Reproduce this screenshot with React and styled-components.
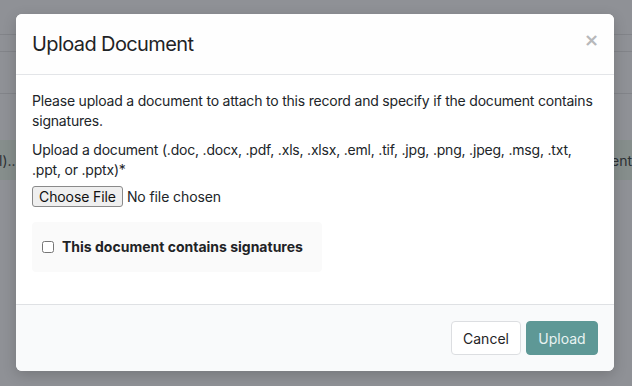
import React from "react";
import styled, { createGlobalStyle } from "styled-components";

const Global = createGlobalStyle`
  html, body { margin: 0; padding: 0; }
  body {
    width: 632px;
    height: 386px;
    overflow: hidden;
    background: #8f9196;
    font-family: Inter, "Liberation Sans", Arial, sans-serif;
    color: #212529;
  }
`;

const Page = styled.div`
  position: relative;
  width: 632px;
  height: 386px;
  overflow: hidden;
  display: flex;
  flex-direction: column;
`;

const BgRow = styled.div`
  height: ${(p) => p.$h}px;
  border-bottom: ${(p) => (p.$line ? "1px solid #828489" : "none")};
  flex: none;
`;

const Band = styled.div`
  height: 40px;
  background: #868e8c;
  display: flex;
  align-items: center;
  justify-content: space-between;
  font-size: 14px;
  color: #2d3134;
  flex: none;
`;

const BandText = styled.span`
  white-space: nowrap;
  margin: ${(p) => (p.$right ? "0 0 0 0" : "0 0 0 -1px")};
`;

const Modal = styled.div`
  position: absolute;
  left: 16px;
  top: 14px;
  width: 598px;
  height: 357px;
  background: #fff;
  border-radius: 6px;
  box-shadow: 0 4px 14px rgba(0, 0, 0, 0.18);
  display: flex;
  flex-direction: column;
  overflow: hidden;
`;

const Header = styled.div`
  display: flex;
  align-items: center;
  justify-content: space-between;
  padding: 16px 16px;
  border-bottom: 1px solid #e3e5e8;
  background: #fefefe;
`;

const Title = styled.h2`
  margin: 0;
  font-size: 20px;
  line-height: 28px;
  font-weight: 400;
  letter-spacing: -0.6px;
  color: #1f2326;
`;

const Close = styled.button`
  border: none;
  background: transparent;
  padding: 0;
  margin: 0 -1px 0 0;
  font-family: "DejaVu Sans", sans-serif;
  font-size: 18px;
  font-weight: 700;
  line-height: 1;
  color: #b7b8ba;
  cursor: pointer;
  position: relative;
  top: -4px;
`;

const Body = styled.div`
  flex: 1;
  padding: 16px 16px 16px;
  font-size: 14px;
  line-height: 20px;
  letter-spacing: -0.2px;
`;

const Para = styled.p`
  margin: 0 0 ${(p) => (p.$last ? 0 : 9)}px;
`;

const FileInput = styled.input`
  display: block;
  margin: 6px 0 0;
  font-family: Inter, "Liberation Sans", Arial, sans-serif;
  font-size: 14px;
  letter-spacing: -0.1px;
  color: #212529;
  height: 21px;
  &::file-selector-button {
    font-family: Inter, "Liberation Sans", Arial, sans-serif;
    font-size: 14px;
    letter-spacing: -0.1px;
    color: #111;
    background: #efefef;
    border: 1px solid #8a8a8a;
    border-radius: 3px;
    padding: 0 6px;
    height: 21px;
    margin-right: 4px;
  }
`;

const CheckPanel = styled.div`
  margin-top: 15px;
  width: 290px;
  box-sizing: border-box;
  padding: 15px 10px;
  background: #fafafa;
  border-radius: 4px;
  display: flex;
  align-items: center;
  gap: 8px;
`;

const Check = styled.input`
  margin: 0;
  width: 12px;
  height: 12px;
`;

const CheckLabel = styled.label`
  font-weight: 700;
  font-size: 14px;
  line-height: 20px;
  letter-spacing: 0;
  color: #1f2326;
`;

const Footer = styled.div`
  border-top: 1px solid #dfe1e4;
  background: #f9fafb;
  padding: 16px 16px 16px;
  display: flex;
  justify-content: flex-end;
  gap: 5px;
`;

const Button = styled.button`
  height: 34px;
  width: ${(p) => p.$w}px;
  box-sizing: border-box;
  border-radius: 4px;
  font-family: Inter, "Liberation Sans", Arial, sans-serif;
  font-size: 14px;
  padding: 0;
  cursor: pointer;
  border: 1px solid ${(p) => (p.$primary ? "#5e9896" : "#dcdee1")};
  background: ${(p) => (p.$primary ? "#5e9896" : "#ffffff")};
  color: ${(p) => (p.$primary ? "#e9f3f2" : "#1f2326")};
`;

export default function App() {
  return (
    <>
      <Global />
      <Page>
        <BgRow $h={34} $line />
        <BgRow $h={16} $line />
        <BgRow $h={41} $line />
        <BgRow $h={46} />
        <Band>
          <BandText>l)..</BandText>
          <BandText $right>ent</BandText>
        </Band>
        <Modal role="dialog" aria-labelledby="upload-title">
          <Header>
            <Title id="upload-title">Upload Document</Title>
            <Close aria-label="Close">×</Close>
          </Header>
          <Body>
            <Para>
              Please upload a document to attach to this record and specify if the
              document contains signatures.
            </Para>
            <Para $last>
              Upload a document (.doc, .docx, .pdf, .xls, .xlsx, .eml, .tif, .jpg,
              .png, .jpeg, .msg, .txt, .ppt, or .pptx)*
            </Para>
            <FileInput type="file" />
            <CheckPanel>
              <Check type="checkbox" id="sig" />
              <CheckLabel htmlFor="sig">This document contains signatures</CheckLabel>
            </CheckPanel>
          </Body>
          <Footer>
            <Button $w={70}>Cancel</Button>
            <Button $w={72} $primary>Upload</Button>
          </Footer>
        </Modal>
      </Page>
    </>
  );
}
